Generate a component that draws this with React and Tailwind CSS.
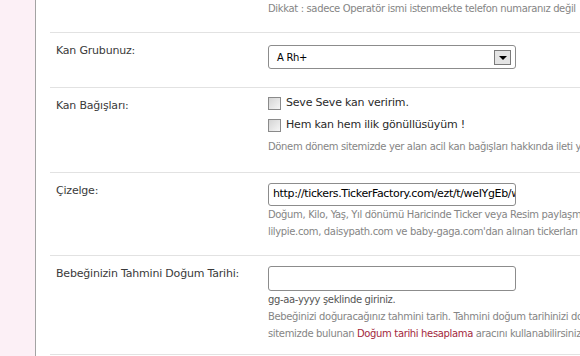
export default function App() {
  const font = { fontFamily: '"DejaVu Sans", Verdana, sans-serif' };
  const Checkbox = () => (
    <span className="inline-block w-[13px] h-[13px] border border-[#8a8a8a] bg-[linear-gradient(135deg,#d4d4d4,#f6f6f6)] mr-[5px] shrink-0" />
  );
  return (
    <div
      className="w-[580px] h-[356px] overflow-hidden flex bg-white font-['DejaVu_Sans',Verdana,sans-serif]"
      style={font}
    >
      <div className="w-[36px] shrink-0 bg-[#fcf0f6] border-r border-[#a3a3a3]" />
      <div className="pl-[14px] w-[700px] shrink-0">
        {/* Row 0 (partial) */}
        <div className="flex h-[32px]">
          <div className="w-[218px] shrink-0" />
          <div className="text-[10px] leading-[17px] tracking-[-0.35px] text-[#858585] whitespace-nowrap">
            Dikkat : sadece Operatör ismi istenmekte telefon numaranız değil
          </div>
        </div>

        {/* Row 1 */}
        <div className="flex border-t border-[#e2e2e2] pb-[18px]">
          <div className="w-[218px] shrink-0 pl-[6px] pt-[9px] text-[11px] leading-[18px] tracking-[-0.2px] text-[#3a3a3a]">
            Kan Grubunuz:
          </div>
          <div className="pt-[12px]">
            <div className="w-[248px] h-[24px] border border-[#8c8c8c] rounded-[3px] flex items-center justify-between pl-[8px] pr-[4px]">
              <span className="text-[10px] tracking-[-0.3px] text-black">A Rh+</span>
              <span className="w-[17px] h-[15px] border border-[#7a7a7a] bg-[#e4e4e4] flex items-center justify-center">
                <span className="w-0 h-0 border-l-[4px] border-r-[4px] border-t-[4px] border-l-transparent border-r-transparent border-t-black mt-[2px]" />
              </span>
            </div>
          </div>
        </div>

        {/* Row 2 */}
        <div className="flex border-t border-[#e2e2e2] pb-[16px]">
          <div className="w-[218px] shrink-0 pl-[6px] pt-[9px] text-[11px] leading-[18px] tracking-[-0.2px] text-[#3a3a3a]">
            Kan Bağışları:
          </div>
          <div className="pt-[4px]">
            <div className="h-[22px] flex items-center text-[11px] tracking-[-0.2px] text-[#2a2a2a]">
              <Checkbox />
              Seve Seve kan veririm.
            </div>
            <div className="h-[22px] flex items-center text-[11px] tracking-[-0.2px] text-[#2a2a2a]">
              <Checkbox />
              Hem kan hem ilik gönüllüsüyüm !
            </div>
            <div className="mt-[2px] text-[10px] leading-[18px] tracking-[-0.35px] text-[#858585] whitespace-nowrap">
              Dönem dönem sitemizde yer alan acil kan bağışları hakkında ileti yollanacaktır.
            </div>
          </div>
        </div>

        {/* Row 3 */}
        <div className="flex border-t border-[#e2e2e2] pb-[15px]">
          <div className="w-[218px] shrink-0 pl-[6px] pt-[9px] text-[11px] leading-[18px] tracking-[-0.2px] text-[#3a3a3a]">
            Çizelge:
          </div>
          <div className="pt-[10px]">
            <div className="w-[248px] h-[23px] border border-[#8c8c8c] rounded-[3px] flex items-center pl-[4px] overflow-hidden">
              <span className="text-[11px] tracking-[-0.35px] text-black whitespace-nowrap">
                http://tickers.TickerFactory.com/ezt/t/weIYgEb/width.png
              </span>
            </div>
            <div className="text-[10px] leading-[17px] tracking-[-0.35px] text-[#858585] whitespace-nowrap">
              Doğum, Kilo, Yaş, Yıl dönümü Haricinde Ticker veya Resim paylaşmayınız.
            </div>
            <div className="text-[10px] leading-[17px] tracking-[-0.35px] text-[#858585] whitespace-nowrap">
              lilypie.com, daisypath.com ve baby-gaga.com'dan alınan tickerları kullanabilirsiniz.
            </div>
          </div>
        </div>

        {/* Row 4 */}
        <div className="flex border-t border-[#e2e2e2] pb-[12px]">
          <div className="w-[218px] shrink-0 pl-[6px] pt-[9px] text-[11px] leading-[18px] tracking-[-0.2px] text-[#3a3a3a]">
            Bebeğinizin Tahmini Doğum Tarihi:
          </div>
          <div className="pt-[10px]">
            <div className="w-[248px] h-[25px] border border-[#8c8c8c] rounded-[3px]" />
            <div className="text-[10px] leading-[17px] tracking-[-0.35px] text-[#555] whitespace-nowrap">
              gg-aa-yyyy şeklinde giriniz.
            </div>
            <div className="text-[10px] leading-[17px] tracking-[-0.35px] text-[#858585] whitespace-nowrap">
              Bebeğinizi doğuracağınız tahmini tarih. Tahmini doğum tarihinizi doktorunuzdan öğrenebilir,
            </div>
            <div className="text-[10px] leading-[17px] tracking-[-0.35px] text-[#858585] whitespace-nowrap">
              sitemizde bulunan <span className="text-[#a3283c]">Doğum tarihi hesaplama</span> aracını kullanabilirsiniz.
            </div>
          </div>
        </div>

        <div className="flex border-t border-[#e2e2e2] h-[20px]" />
      </div>
    </div>
  );
}
